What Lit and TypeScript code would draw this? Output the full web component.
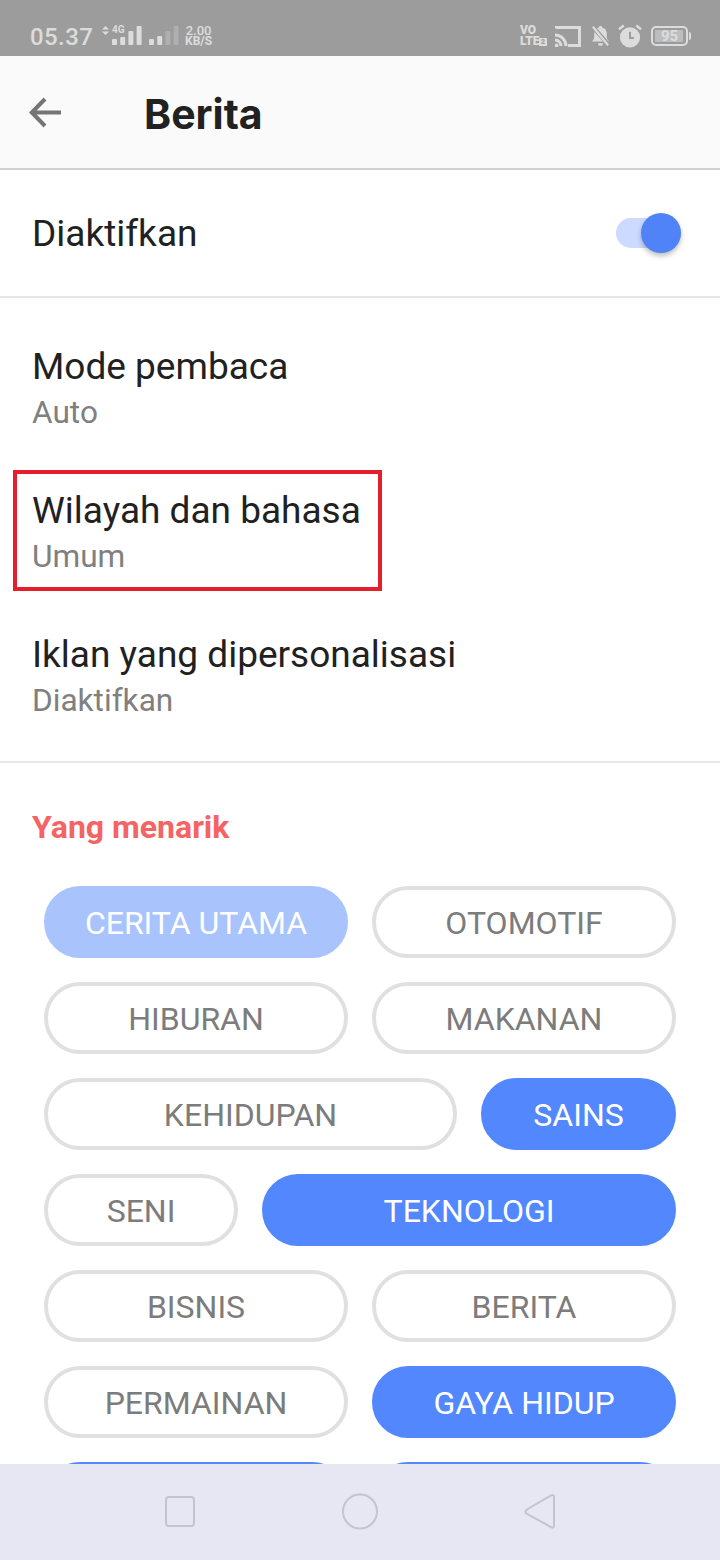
import { LitElement, css, html, svg } from "lit";
import { customElement } from "lit/decorators.js";
import { classMap } from "lit/directives/class-map.js";

type Chip = { label: string; on?: boolean; dim?: boolean };

const chipRows: { cols: string; chips: Chip[] }[] = [
  { cols: "1fr 1fr", chips: [{ label: "CERITA UTAMA", dim: true }, { label: "OTOMOTIF" }] },
  { cols: "1fr 1fr", chips: [{ label: "HIBURAN" }, { label: "MAKANAN" }] },
  { cols: "413px 195px", chips: [{ label: "KEHIDUPAN" }, { label: "SAINS", on: true }] },
  { cols: "194px 414px", chips: [{ label: "SENI" }, { label: "TEKNOLOGI", on: true }] },
  { cols: "1fr 1fr", chips: [{ label: "BISNIS" }, { label: "BERITA" }] },
  { cols: "1fr 1fr", chips: [{ label: "PERMAINAN" }, { label: "GAYA HIDUP", on: true }] },
  { cols: "1fr 1fr", chips: [{ label: "", on: true }, { label: "", on: true }] },
];

const signal = (heights: number[], dimFrom: number) => svg`
  ${heights.map(
    (h, i) => svg`<rect x=${i * 8.2} y=${19 - h} width="5" height=${h} rx="1" fill="#dcdcdc" opacity=${i >= dimFrom ? 0.3 : 1}></rect>`
  )}
`;

@customElement("app-root")
export class AppRoot extends LitElement {
  static styles = css`
    :host {
      display: block;
      width: 720px;
      height: 1560px;
      font-family: Roboto, "Liberation Sans", sans-serif;
      background: #fff;
    }
    .screen {
      height: 1560px;
      display: flex;
      flex-direction: column;
      overflow: hidden;
    }
    .status {
      height: 56px;
      flex: none;
      background: #9c9c9c;
      color: #dcdcdc;
      display: flex;
      align-items: center;
      padding: 18px 32px 0 30px;
      box-sizing: border-box;
    }
    .clock {
      width: 72px;
      font-size: 24px;
      font-weight: 500;
      letter-spacing: 0.4px;
      line-height: 40px;
    }
    .net {
      position: relative;
      width: 75px;
      height: 22px;
      flex: none;
    }
    .net svg {
      display: block;
    }
    .fourg {
      position: absolute;
      left: 10px;
      top: 0;
      font-size: 10px;
      font-weight: 700;
      line-height: 8px;
    }
    .arrows {
      position: absolute;
      left: 0;
      top: 0;
    }
    .bars1 {
      position: absolute;
      left: 10px;
      top: 0;
    }
    .bars2 {
      position: absolute;
      left: 47px;
      top: 0;
    }
    .speed {
      margin-left: 8px;
      margin-top: -2px;
      font-size: 12px;
      font-weight: 700;
      line-height: 11px;
      display: flex;
      flex-direction: column;
      align-items: center;
    }
    .speed .big {
      font-size: 13px;
      font-weight: 500;
    }
    .right {
      margin-left: auto;
      display: flex;
      align-items: center;
      margin-top: -2px;
    }
    .volte {
      font-size: 12px;
      font-weight: 900;
      line-height: 11px;
      width: 27px;
      margin-right: 8px;
      position: relative;
    }
    .sim {
      position: absolute;
      left: 19px;
      bottom: 1px;
      width: 8px;
      height: 8px;
      background: #dcdcdc;
      color: #9c9c9c;
      font-size: 7px;
      line-height: 8px;
      text-align: center;
    }
    .batt {
      position: relative;
      width: 33px;
      height: 16px;
      border: 2px solid #dcdcdc;
      border-radius: 5px;
      margin-left: 9px;
      font-size: 15px;
      font-weight: 700;
      display: flex;
      align-items: center;
      justify-content: center;
      background: linear-gradient(#bdbdbd, #bdbdbd) 2px 2px / 28px 12px no-repeat;
    }
    .batt::after {
      content: "";
      position: absolute;
      right: -5px;
      top: 4px;
      width: 2px;
      height: 8px;
      background: #dcdcdc;
      border-radius: 0 2px 2px 0;
    }
    .appbar {
      height: 114px;
      flex: none;
      box-sizing: border-box;
      background: #fafafa;
      border-bottom: 2px solid #cfcfcf;
      display: flex;
      align-items: center;
      padding-left: 29px;
    }
    .appbar svg {
      display: block;
    }
    .title {
      margin-left: 82px;
      margin-top: 4px;
      font-family: Inter, Roboto, sans-serif;
      font-size: 41px;
      font-weight: 700;
      color: #212121;
    }
    .scroll {
      flex: 1;
      min-height: 0;
      overflow: hidden;
    }
    .row {
      padding: 0 39px 0 32px;
      display: flex;
      align-items: center;
      justify-content: space-between;
      height: 128px;
      box-sizing: border-box;
      border-bottom: 2px solid #e6e6e6;
    }
    .row .label {
      margin-top: 2px;
    }
    .label {
      font-size: 37px;
      line-height: 44px;
      color: #212121;
    }
    .toggle {
      position: relative;
      width: 65px;
      height: 30px;
      border-radius: 15px;
      background: #ccdaff;
    }
    .knob {
      position: absolute;
      right: 0;
      top: -5px;
      width: 40px;
      height: 40px;
      border-radius: 50%;
      background: #5083f8;
      box-shadow: 0 3px 5px rgba(0, 0, 0, 0.25);
    }
    .group {
      padding: 26px 0 5px 32px;
      border-bottom: 2px solid #e6e6e6;
    }
    .item {
      height: 144px;
      box-sizing: border-box;
      padding-top: 21px;
    }
    .sub {
      font-size: 31.6px;
      line-height: 38px;
      margin-top: 5px;
      color: #808080;
    }
    .marked {
      position: relative;
    }
    .mark {
      position: absolute;
      left: -19px;
      top: 2px;
      width: 361px;
      height: 113px;
      border: 4px solid #e41e2b;
      pointer-events: none;
    }
    .section {
      padding: 44px 44px 0;
    }
    .heading {
      margin-left: -12px;
      font-size: 32px;
      line-height: 40px;
      font-weight: 700;
      color: #f46464;
      margin-bottom: 39px;
    }
    .chips {
      display: flex;
      flex-direction: column;
      gap: 24px;
    }
    .chip-row {
      display: grid;
      column-gap: 24px;
    }
    .chip {
      height: 72px;
      box-sizing: border-box;
      border: 4px solid #e0e0e0;
      border-radius: 36px;
      padding-top: 2px;
      display: flex;
      align-items: center;
      justify-content: center;
      font-size: 32px;
      color: #7c7c7c;
    }
    .chip.on {
      background: #5287fe;
      border-color: #5287fe;
      color: #fff;
    }
    .chip.dim {
      background: #a9c3fd;
      border-color: #a9c3fd;
      color: #fff;
    }
    .nav {
      height: 96px;
      flex: none;
      background: #e6e7f2;
      position: relative;
      z-index: 1;
    }
    .nav svg {
      display: block;
    }
  `;

  render() {
    return html`
      <div class="screen">
        ${this.renderStatus()}
        <div class="appbar">
          <svg width="33" height="33" viewBox="0 0 33 33" fill="none" stroke="#757575" stroke-width="4">
            <path d="M32 16.500H3M16 3 2.800 16.500 16 30"></path>
          </svg>
          <div class="title">Berita</div>
        </div>
        <div class="scroll">
          <div class="row">
            <div class="label">Diaktifkan</div>
            <div class="toggle"><div class="knob"></div></div>
          </div>
          <div class="group">
            <div class="item">
              <div class="label">Mode pembaca</div>
              <div class="sub">Auto</div>
            </div>
            <div class="item marked">
              <div class="label">Wilayah dan bahasa</div>
              <div class="sub">Umum</div>
              <div class="mark"></div>
            </div>
            <div class="item">
              <div class="label">Iklan yang dipersonalisasi</div>
              <div class="sub">Diaktifkan</div>
            </div>
          </div>
          <div class="section">
            <div class="heading">Yang menarik</div>
            <div class="chips">
              ${chipRows.map(
                (r) => html`
                  <div class="chip-row" style="grid-template-columns:${r.cols}">
                    ${r.chips.map(
                      (c) => html`<div class=${classMap({ chip: true, on: !!c.on, dim: !!c.dim })}>${c.label}</div>`
                    )}
                  </div>
                `
              )}
            </div>
          </div>
        </div>
        ${this.renderNav()}
      </div>
    `;
  }

  renderStatus() {
    return html`
      <div class="status">
        <span class="clock">05.37</span>
        <div class="net">
          <svg class="arrows" width="7" height="9" viewBox="0 0 7 9" fill="#dcdcdc">
            <path d="M3.500 0 7 3.600H0ZM3.500 9 0 5.400H7Z"></path>
          </svg>
          <svg class="bars1" width="30" height="19" viewBox="0 0 30 19">${signal([6, 8, 14, 19], 9)}</svg>
          <span class="fourg">4G</span>
          <svg class="bars2" width="30" height="19" viewBox="0 0 30 19">${signal([6, 9, 14, 19], 2)}</svg>
        </div>
        <div class="speed"><span class="big">2.00</span><span>KB/S</span></div>
        <div class="right">
          <div class="volte">VO<br />LTE<span class="sim">2</span></div>
          <svg width="26" height="21" viewBox="0 0 26 21" fill="none" stroke="#dcdcdc" stroke-width="3">
            <path d="M1 2.500V1.500H24.500V19.500H13"></path>
            <path d="M0 9A11 11 0 0 1 11 20M0 14A6 6 0 0 1 6 20"></path>
            <circle cx="1.500" cy="19.500" r="1" fill="#dcdcdc" stroke-width="2"></circle>
          </svg>
          <svg style="margin-left:10px" width="19" height="22" viewBox="0 0 22 26">
            <path fill="#dcdcdc" d="M11 1a2 2 0 0 1 2 2c4 1 5.500 4 5.500 8v5l2.500 3.500H1L3.500 16v-5C3.500 7 5.500 4 9 3a2 2 0 0 1 2-2ZM8 21.500h6a3 3 0 0 1-6 0Z"></path>
            <path stroke="#9c9c9c" stroke-width="5" d="M1 1 21 24"></path>
            <path stroke="#dcdcdc" stroke-width="2.600" d="M2 2 20 24"></path>
          </svg>
          <svg style="margin-left:8px" width="24" height="24" viewBox="0 0 25 25">
            <circle cx="12.500" cy="14" r="10.500" fill="#dcdcdc"></circle>
            <path fill="none" stroke="#dcdcdc" stroke-width="2.500" d="M1 5.500 6 1.500M24 5.500 19 1.500"></path>
            <path fill="none" stroke="#9c9c9c" stroke-width="2" d="M12.500 8v6.500h4"></path>
          </svg>
          <div class="batt">95</div>
        </div>
      </div>
    `;
  }

  renderNav() {
    return html`
      <div class="nav">
        <svg width="720" height="96" viewBox="0 0 720 96" fill="none" stroke="#c3c4cf" stroke-width="2">
          <rect x="166" y="33" width="28" height="29" rx="3"></rect>
          <circle cx="360" cy="47.500" r="17"></circle>
          <path d="M554 33V61Q554 65 551 63L527 50Q524 48 527 45.500L551 31.500Q554 30 554 33Z"></path>
        </svg>
      </div>
    `;
  }
}
